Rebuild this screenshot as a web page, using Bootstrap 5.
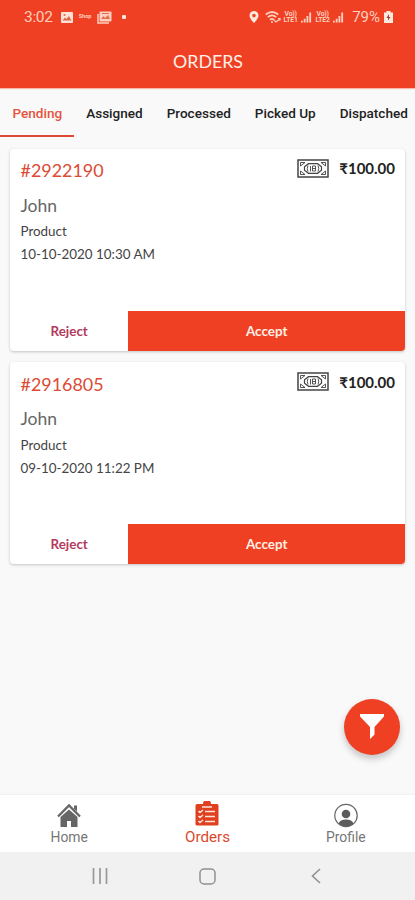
<!DOCTYPE html>
<html lang="en">
<head>
<meta charset="utf-8">
<meta name="viewport" content="width=device-width, initial-scale=1">
<title>Orders</title>
<link href="https://cdn.jsdelivr.net/npm/bootstrap@5.3.0/dist/css/bootstrap.min.css" rel="stylesheet">
<style>
:root{--brand:#f04023}
body{font-family:Lato,sans-serif;background:#f9f9f9;color:#444;overflow:hidden}
svg{display:block;flex:none}
.screen{height:900px;width:415px}
.app-head{height:88px;background:var(--brand);color:#fde3d8;box-shadow:0 1px 1px #f6b8a8}
.status-row{height:34px;padding:0 22px 0 24px;font:15.5px/34px Roboto,sans-serif;color:#ffd0bf}
.clock{letter-spacing:-.3px}
.tiny-word{font:bold 5.5px/1 Roboto,sans-serif;width:14px;margin-left:6px}
.volte{font:bold 6.8px/6.5px Roboto,sans-serif;width:15px;text-align:center;letter-spacing:-.2px}
.dot{width:4px;height:4px;border-radius:1px;background:#ffe3d8}
.app-title{font-size:17.8px;line-height:55px;color:#fff0e8;padding-left:1px}
.tab-strip{height:49px;padding-left:12.5px;gap:24px;font:500 13.55px/51px Roboto,sans-serif;color:#222;white-space:nowrap}
.tab-on{color:#e5543e;position:relative}
.tab-on::after{content:"";position:absolute;left:-13px;right:-12px;bottom:0;height:2px;background:#df4938}
.order-list{padding:11.5px 10px 0;gap:11.5px}
.order{height:202px;border:0;border-radius:4px;box-shadow:0 1px 3px rgba(0,0,0,.22);overflow:hidden}
.order-body{padding:0 10px 0 10.5px;height:162px}
.order-id{font-size:17.9px;line-height:24px;color:#dc4b35;margin-top:9.5px}
.price{font-size:15px;line-height:20px;font-weight:700;color:#222;margin-top:6px;gap:10px}
.who{font-size:17.5px;line-height:24px;color:#666;margin-top:11.5px}
.detail{font-size:13.4px;line-height:23px;color:#444}
.item-line{margin-top:2.5px}
.order .btn{height:40px;border:0;border-radius:0;font-size:13.4px;font-weight:700;padding:0;line-height:40px}
.order .btn-reject{width:118.4px;color:#b3395e}
.order .btn-accept,.order .btn-accept:hover{background:var(--brand);color:#fff0e6}
.filter-fab{position:absolute;left:344px;top:698.5px;width:56px;height:56px;background:var(--brand);box-shadow:0 4px 7px rgba(0,0,0,.22)}
.bottom-tabs{height:57.5px;background:#fff;font:13.9px/18px Roboto,sans-serif;color:#777;box-shadow:0 -1px 1px #f1f1f1}
.bottom-tabs>a{color:inherit;width:138.33px;padding-top:8.5px}
.bottom-tabs>.now{color:#db482b;font-size:15.2px;padding-top:6.5px}
.bottom-tabs>.now>span{margin-top:1px}
.sys-bar{height:48px;background:#f1f1f1}
.sys-bar>span{width:108px}
</style>
<script src="https://cdn.jsdelivr.net/npm/bootstrap@5.3.0/dist/js/bootstrap.bundle.min.js"></script>
</head>
<body>
<svg class="d-none">
  <symbol id="note" viewBox="0 0 32 19"><g fill="none" stroke="#444"><rect x="1" y="1" width="30" height="17" stroke-width="1.5"/><path d="M3.500 7V3.500H8M24 3.500h4.500V7M3.500 12v3.500H8M24 15.500h4.500V12M3.500 7l4.500-3.500M28.500 7 24 3.500M3.500 12 8 15.500M28.500 12 24 15.500" stroke-width=".9"/><path d="M11.500 4.700h9l4 3v3.600l-4 3h-9l-4-3V7.700z" stroke-width="1.200"/><path d="M11 6.500q-1.500 3 0 6M21 6.500q1.500 3 0 6" stroke-width=".9"/><path d="M13.500 7v5.500M15.500 7v5h3V7zM15.500 9.500h3" stroke-width=".9"/></g></symbol>
  <symbol id="bars" viewBox="0 0 12 12"><path d="M0 12V10h2v2zM3 12V8h2v4zM6 12V5h2v7zM9 12V1h2v11z" fill="#ffd0bf"/></symbol>
</svg>
<div class="screen d-flex flex-column position-relative">
  <header class="app-head flex-shrink-0">
    <div class="status-row d-flex align-items-center">
      <span class="clock">3:02</span>
      <svg style="margin-left:8px" width="12" height="11" viewBox="0 0 12 11"><rect width="12" height="11" rx="1" fill="#ffe0d4"/><path d="M1.500 8.500 4 5.500l1.500 1.500L8 4l2.500 4.500z" fill="#d96650"/><circle cx="3.500" cy="3" r="1" fill="#d96650"/></svg>
      <span class="tiny-word">Shop</span>
      <svg class="ms-1" width="15" height="13" viewBox="0 0 15 13"><path d="M1 3v9h11" fill="none" stroke="#ffd0bf" stroke-width="1.500"/><rect x="2.500" y=".5" width="12" height="10" rx="1" fill="#ffd0bf"/><path d="m4 8 2.500-3L8 7l3-3 2 4z" fill="#e26b52"/><path d="M5 2.500h7" stroke="#e26b52"/></svg>
      <span class="dot" style="margin-left:10px"></span>
      <svg class="ms-auto" width="10" height="12" viewBox="0 0 10 12"><path fill="#ffe9df" fill-rule="evenodd" d="M5 0a4.500 4.500 0 0 0-4.500 4.500C.5 7.500 5 12 5 12s4.500-4.500 4.500-7.500A4.500 4.500 0 0 0 5 0zm0 2.800a1.800 1.800 0 1 1 0 3.600 1.800 1.800 0 0 1 0-3.600z"/></svg>
      <svg style="margin-left:6px" width="16" height="13" viewBox="0 0 16 13"><g fill="none" stroke="#ffd0bf" stroke-width="1.700"><path d="M.8 3.500q6.200-5 12.400 0M2.800 6.200q4.200-3.500 8.400 0M5 8.800q2-1.800 4 0"/><path d="m9 9 2 2 4-3M13 7.500h2v2" stroke-width="1.200"/></g><circle cx="7" cy="11" r="1" fill="#ffd0bf"/></svg>
      <span class="volte" style="margin-left:2px">Vo))<br>LTE1</span>
      <svg style="margin-left:3px" width="11" height="12"><use href="#bars"/></svg>
      <span class="volte" style="margin-left:3px">Vo))<br>LTE2</span>
      <svg style="margin-left:3px" width="11" height="12"><use href="#bars"/></svg>
      <span style="margin-left:8px;font-size:15px">79%</span>
      <svg style="margin-left:4px" width="9" height="12" viewBox="0 0 9 12"><path fill="#ffe9df" d="M2.500 0h4v1.500H9V12H0V1.500h2.500z"/><path d="M5 3 2.500 7H4v2.500L6.500 6H5z" fill="#a34235"/></svg>
    </div>
    <div class="app-title text-center">ORDERS</div>
  </header>
  <nav class="tab-strip d-flex flex-shrink-0">
    <span class="tab-on">Pending</span><span>Assigned</span><span>Processed</span><span>Picked Up</span><span>Dispatched</span>
  </nav>
  <main class="order-list d-flex flex-column flex-grow-1">
    <article class="card order">
      <div class="order-body">
        <div class="d-flex justify-content-between"><div class="order-id">#2922190</div><div class="price d-flex align-items-center"><svg width="32" height="19"><use href="#note"/></svg><span>₹100.00</span></div></div>
        <div class="who">John</div><div class="detail item-line">Product</div><div class="detail">10-10-2020 10:30 AM</div>
      </div>
      <div class="d-flex"><button class="btn btn-reject">Reject</button><button class="btn btn-accept flex-grow-1">Accept</button></div>
    </article>
    <article class="card order">
      <div class="order-body">
        <div class="d-flex justify-content-between"><div class="order-id">#2916805</div><div class="price d-flex align-items-center"><svg width="32" height="19"><use href="#note"/></svg><span>₹100.00</span></div></div>
        <div class="who">John</div><div class="detail item-line">Product</div><div class="detail">09-10-2020 11:22 PM</div>
      </div>
      <div class="d-flex"><button class="btn btn-reject">Reject</button><button class="btn btn-accept flex-grow-1">Accept</button></div>
    </article>
  </main>
  <div class="filter-fab rounded-circle d-flex align-items-center justify-content-center">
    <svg width="24" height="25" viewBox="0 0 24 25"><path d="M0 0h24v2.500L14.500 13v7.500L10 25V13L0 2.500z" fill="#fff"/></svg>
  </div>
  <nav class="bottom-tabs d-flex flex-shrink-0">
    <a class="d-flex flex-column align-items-center text-decoration-none"><svg width="24" height="25" viewBox="0 0 24 25"><path d="M12 6.500 20.500 14v10H14v-6h-4v6H3.500V14z" fill="#666"/><path d="m1 13.500 11-11 11 11" fill="none" stroke="#666" stroke-width="2.300"/><path d="M17 2.500h3v6l-3-3z" fill="#666"/></svg><span>Home</span></a>
    <a class="now d-flex flex-column align-items-center text-decoration-none"><svg width="24" height="26" viewBox="0 0 24 26"><path d="M2 3h6a4 4 0 0 1 8 0h6a1.500 1.500 0 0 1 1.500 1.500V23a1.500 1.500 0 0 1-1.500 1.500H2A1.500 1.500 0 0 1 .5 23V4.500A1.500 1.500 0 0 1 2 3z" fill="#df401f"/><path d="M7 6h10M10 10.500h10M10 15.500h10M10 20.500h10M3.500 10l1.500 1.500L8 9M3.500 15l1.500 1.500L8 14M3.500 20l1.500 1.500L8 19" fill="none" stroke="#ffe3da" stroke-width="1.500"/></svg><span>Orders</span></a>
    <a class="d-flex flex-column align-items-center text-decoration-none"><svg width="24" height="25" viewBox="0 0 24 25"><circle cx="12" cy="12.500" r="11.200" fill="none" stroke="#666" stroke-width="1.200"/><circle cx="12" cy="11" r="4.300" fill="#5c5c5c"/><path d="M4.500 20.500q1.500-4 7.500-4t7.500 4A11 11 0 0 1 12 23.500a11 11 0 0 1-7.500-3z" fill="#5c5c5c"/></svg><span>Profile</span></a>
  </nav>
  <div class="sys-bar d-flex align-items-center justify-content-center flex-shrink-0">
    <span class="d-flex justify-content-center"><svg width="16" height="16" viewBox="0 0 16 16"><path d="M1.500 0v16M8 0v16M14.500 0v16" stroke="#999" stroke-width="1.700"/></svg></span>
    <span class="d-flex justify-content-center"><svg width="17" height="17" viewBox="0 0 17 17"><rect x="1" y="1" width="15" height="15" rx="4" fill="none" stroke="#909090" stroke-width="1.500"/></svg></span>
    <span class="d-flex justify-content-center"><svg width="10" height="16" viewBox="0 0 10 16"><path d="m9 1-7.500 7L9 15" fill="none" stroke="#909090" stroke-width="1.600"/></svg></span>
  </div>
</div>
</body>
</html>
